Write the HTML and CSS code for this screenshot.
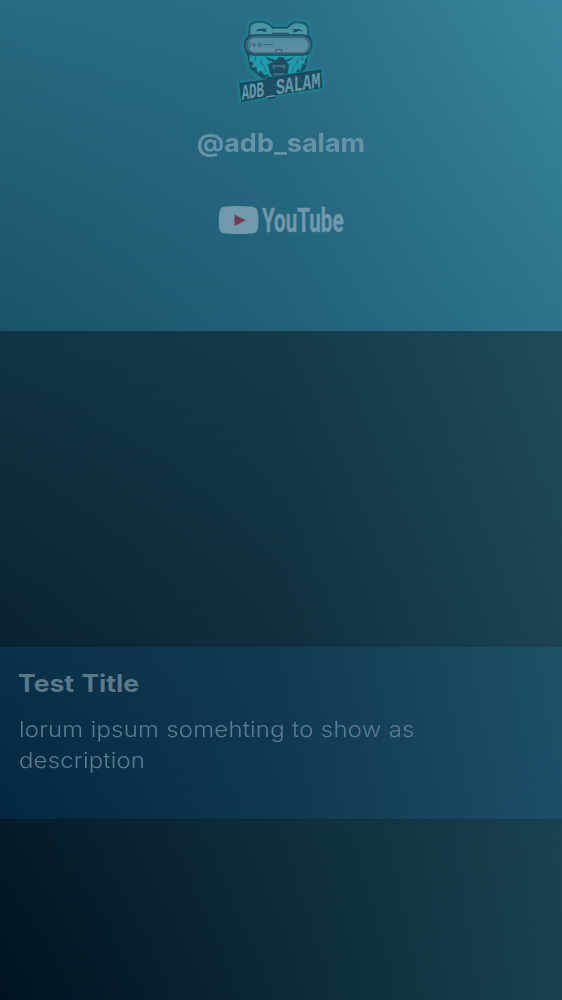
FILE: index.html
```html
<!DOCTYPE html>
<html lang="en">
<head>
<meta charset="utf-8">
<title>@adb_salam</title>
<link rel="stylesheet" href="styles.css">
</head>
<body>
<header class="band profile">
  <svg class="logo" viewBox="0 0 300 300" role="img" aria-label="ADB_SALAM bear logo">
    <defs>
      <linearGradient id="visor" x2="0" y2="1"><stop stop-color="#508ca0"/><stop offset="1" stop-color="#638da0"/></linearGradient>
    </defs>
    <g class="logo-glow"><path d="M50 76L52 48Q56 33 77 32H99Q118 37 129 49H167Q176 36 191 33H210Q231 34 235 55V75Q245 82 244 106Q243 125 233 134L226 174L207 194L190 214H105L78 195L55 176L48 139Q37 124 38 101Q38 85 50 76Z"/><path d="M26 219L271 180L275 233L30 273Z"/></g>
    <path class="outline" d="M50 76L52 48Q56 33 77 32H99Q118 37 129 49H167Q176 36 191 33H210Q231 34 235 55V75Q245 82 244 106Q243 125 233 134L226 174L207 194L190 214H105L78 195L55 176L48 139Q37 124 38 101Q38 85 50 76Z"/>
    <path class="ear" d="M57 76V52Q61 40 76 38H98Q115 42 123 55H171Q179 42 193 39H211Q226 42 229 55V76Z"/>
    <path class="ink" d="M74 64Q77 57 93 56H112L102 60L108 66H99L94 62ZM181 57H201Q209 58 215 64L201 62L195 67H183L191 61ZM123 68H174V71H123Z"/>
    <path class="fur" d="M55 136H232L221 151V165L215 160L207 184L201 175L190 196L181 190L166 207H124L111 193L99 195L91 182L80 189L76 170L64 174L67 156L56 155Z"/>
    <path class="ink" d="M102 140L135 151L142 142H156L164 151L191 140L178 151L166 155L174 164L170 191L160 201H126L116 188L111 163L127 155L111 150Z"/>
    <path class="mouth" d="M123 164H164V172L158 181L153 172H133L127 181ZM125 189H162L157 196H130Z"/>
    <path class="fur-line" d="M72 139L75 150L68 151M86 146L94 154L88 158L99 166M216 139L211 150L219 149M204 143L196 154L203 157L190 165M99 170L105 187M188 170L183 187"/>
    <rect class="visor-rim" x="42" y="75" width="200" height="60" rx="29"/>
    <rect class="visor" x="50" y="82" width="184" height="46" rx="22"/>
    <path class="visor-line" d="M127 82V77H158V82M135 129V119H153V129"/>
    <rect class="visor-line" x="50" y="82" width="184" height="47" rx="22"/>
    <path class="panel-line" d="M56 98V113M63 104L68 99L74 104L68 109ZM82 103L86 98L90 103V108H82ZM98 104H126"/>
    <path class="plate-shadow" d="M23 218L105 207V201L136 197L271 177L276 235L136 257L133 266L108 270V262L30 278Z"/>
    <path class="plate" d="M28 223L107 211L132 205L267 182L270 229L134 252L130 260L108 263V257L34 270Z"/>
    <g class="logo-word" transform="translate(32 270) skewY(-9.2)">
      <text textLength="67" lengthAdjust="spacingAndGlyphs">ADB</text>
      <path d="M74 1H100V5H74Z"/>
      <text x="103" textLength="133" lengthAdjust="spacingAndGlyphs">SALAM</text>
    </g>
    <path class="sparks" d="M25 30H27M13 88H15M30 168H32M20 55H22M268 110H270M282 77H284M254 40H256M96 280H98M155 282H157M199 270H201M14 138H16M38 10H40M222 10H224"/>
  </svg>
  <h1 class="handle">@adb_salam</h1>
  <a class="youtube" aria-label="YouTube">
    <svg viewBox="0 0 126 30">
      <path class="youtube-shape" d="M7 1Q20 0 33 1Q39 1 39.5 8Q40.5 15 39.5 22Q39 28 33 28Q20 29 7 28Q1 28 .7 22Q-.3 15 .7 8Q1 1 7 1Z" transform="translate(.5 .5)"/>
      <path class="play" d="M16.5 9.5L27.5 15.3L16.5 21Z"/>
      <text class="youtube-word" x="44" y="26.5" textLength="81.5" lengthAdjust="spacingAndGlyphs">YouTube</text>
    </svg>
  </a>
</header>
<main>
  <section class="band media"></section>
  <section class="band details">
    <h2 class="title">Test Title</h2>
    <p class="description">lorum ipsum somehting to show as<br>description</p>
  </section>
</main>
<footer class="band bottom"></footer>
</body>
</html>
```
FILE: styles.css
```css
* { box-sizing: border-box; }
body {
  margin: 0;
  min-height: 1000px;
  font-family: Inter, "Open Sans", sans-serif;
  background: #00111f;
}
/* Each band blends an upper horizontal gradient into a lower one. */
.band {
  position: relative;
  isolation: isolate;
  background: linear-gradient(90deg, var(--tl), var(--tm), var(--tr));
}
.band::before {
  content: "";
  position: absolute;
  inset: 0;
  z-index: -1;
  background: linear-gradient(90deg, var(--bl), var(--bm), var(--br));
  mask-image: linear-gradient(transparent, #000);
}
.profile {
  --tl: #286b82; --tm: #2a6f87; --tr: #38879e;
  --bl: #1b526a; --bm: #226079; --br: #2b748c;
  height: 331px;
  padding-top: 10px;
  display: flex;
  flex-direction: column;
  align-items: center;
}
.media {
  --tl: #123445; --tm: #153a4a; --tr: #1f4c5b;
  --bl: #082330; --bm: #102f3e; --br: #1b4453;
  height: 316px;
}
.details {
  --tl: #0a3148; --tm: #103b53; --tr: #1d5267;
  --bl: #032740; --bm: #0e3850; --br: #1b4f67;
  height: 172px;
  padding: 20px 19px;
}
.bottom {
  --tl: #051b28; --tm: #0e2e3b; --tr: #1b4250;
  --bl: #001220; --bm: #0a2936; --br: #194150;
  height: 181px;
}
.logo { width: 100px; height: 100px; flex: none; overflow: visible; }
.handle {
  margin: 16px 0 0;
  font-size: 25px;
  line-height: 34px;
  font-weight: 700;
  color: #6694a7;
  transform: scaleX(1.08);
}
.youtube { margin-top: 45px; width: 126px; height: 30px; }
.youtube svg { display: block; width: 126px; height: 30px; overflow: visible; }
.youtube-shape, .youtube-word { fill: #7099ab; }
.youtube-word { font: 700 33px Roboto, sans-serif; stroke: #7099ab; stroke-width: .4; }
.play { fill: #703c4e; }
.title {
  width: fit-content;
  margin: 0;
  font-size: 24px;
  line-height: 34px;
  word-spacing: 1px;
  color: #5b7889;
  transform: translateX(-1px) scaleX(1.105);
  transform-origin: left;
}
.description {
  width: fit-content;
  margin: 13px 0 0;
  font-size: 22px;
  line-height: 31px;
  letter-spacing: .2px;
  word-spacing: .3px;
  font-weight: 300;
  color: #5b7c8e;
  transform: scaleX(1.087);
  transform-origin: left;
}
.logo-glow { fill: #168c9b; stroke: #168c9b; stroke-width: 10; filter: blur(4px); opacity: .7; }
.outline { fill: #1d4e61; stroke: #23788b; stroke-width: 4; }
.ear { fill: #4895a5; stroke: #276679; stroke-width: 3; }
.ink { fill: #1e4d60; }
.fur { fill: #1e9cac; }
.mouth { fill: #376c80; }
.fur-line { fill: none; stroke: #24687a; stroke-width: 3; }
.visor-rim { fill: #426f83; stroke: #1d4e61; stroke-width: 5; }
.visor { fill: url(#visor); }
.visor-line, .panel-line { fill: none; stroke: #285a6d; stroke-width: 2.5; }
.plate-shadow { fill: #164a5c; stroke: #168d9a; stroke-width: 2; }
.plate { fill: #1d4e62; }
.logo-word { font: 700 66px "Liberation Mono", monospace; fill: #6797aa; }
.sparks { stroke: #2894a6; stroke-width: 2; }
```
